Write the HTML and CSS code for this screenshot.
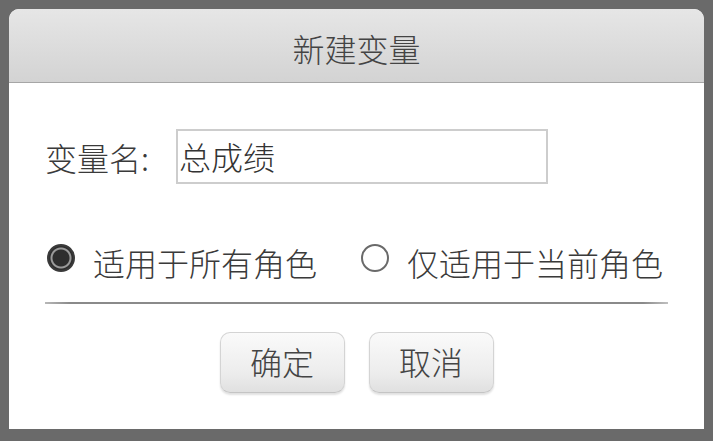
FILE: index.html
```html
<!doctype html>
<html lang="zh-CN">
<head>
	<meta charset="UTF-8">
	<title>新建变量</title>
	<link rel="stylesheet" href="styles.css">
</head>
<body>
	<div class="dialog">
		<div class="dialog-title">新建变量</div>
		<div class="dialog-body">
			<div class="name-row">
				<label class="name-label" for="varName">变量名:</label>
				<input class="name-input" id="varName" type="text" value="总成绩">
			</div>
			<div class="scope-row">
				<label class="scope">
					<input type="radio" name="scope" checked>
					<span>适用于所有角色</span>
				</label>
				<label class="scope">
					<input type="radio" name="scope">
					<span>仅适用于当前角色</span>
				</label>
			</div>
			<div class="divider"></div>
			<div class="btn-row">
				<a class="btn" href="javascript:void(0);">确定</a>
				<a class="btn" href="javascript:void(0);">取消</a>
			</div>
		</div>
	</div>
</body>
</html>
```
FILE: styles.css
```css
html, body {
	margin: 0;
	height: 100%;
}
body {
	background-color: #6a6a6a;
	padding: 9px 9px 12px 9px;
	box-sizing: border-box;
	font-family: "Noto Sans CJK SC", "Liberation Sans", sans-serif;
	font-weight: 300;
	color: #3c3c3c;
}
.dialog {
	width: 695px;
	height: 420px;
	background-color: #fff;
	border-radius: 10px 10px 0 0;
	overflow: hidden;
}
.dialog-title {
	height: 67px;
	padding-top: 6px;
	line-height: 67px;
	text-align: center;
	font-size: 32px;
	color: #444;
	background: linear-gradient(#e6e6e6, #d3d3d3);
	border-bottom: 1px solid #a6a6a6;
}
.dialog-body {
	padding: 0 36px;
}
.name-row {
	display: flex;
	align-items: center;
	margin-top: 46px;
}
.name-label {
	width: 131px;
	font-size: 32px;
	line-height: 1;
	color: #3a3a3a;
}
.name-input {
	width: 372px;
	height: 55px;
	box-sizing: border-box;
	border: 2px solid #cdcdcd;
	padding: 0 0 2px 1px;
	margin: 0;
	font-family: inherit;
	font-weight: 300;
	font-size: 32px;
	color: #333;
	outline: none;
}
.scope-row {
	display: flex;
	align-items: center;
	gap: 44px;
	margin-top: 61px;
	padding-left: 2px;
}
.scope {
	display: flex;
	align-items: center;
	font-size: 32px;
	line-height: 34px;
	color: #3a3a3a;
}
.scope input {
	-webkit-appearance: none;
	appearance: none;
	width: 28px;
	height: 28px;
	margin: -8px 18px 0 0;
	border-radius: 50%;
	border: 2px solid #6a6a6a;
	box-sizing: border-box;
	background-color: #fff;
}
.scope input:checked {
	border-color: #3a3a3a;
	background: radial-gradient(circle, #2e2e2e 0, #2e2e2e 8px, #9a9a9a 9px, #9a9a9a 10px, #2e2e2e 11px);
}
.divider {
	height: 2px;
	margin-top: 23px;
	background: linear-gradient(90deg, #b8b8b8, #8a8a8a 4%, #8a8a8a 96%, #c0c0c0);
}
.btn-row {
	display: flex;
	justify-content: center;
	gap: 24px;
	margin-top: 28px;
}
a {
	text-decoration: none;
}
.btn {
	width: 125px;
	height: 61px;
	box-sizing: border-box;
	line-height: 57px;
	text-align: center;
	font-size: 32px;
	color: #444;
	border: 1px solid #d4d4d4;
	border-bottom-color: #c4c4c4;
	border-radius: 10px;
	background: linear-gradient(#fafafa, #ececec 70%, #e0e0e0);
	box-shadow: 0 2px 2px rgba(0,0,0,.12);
}
```
